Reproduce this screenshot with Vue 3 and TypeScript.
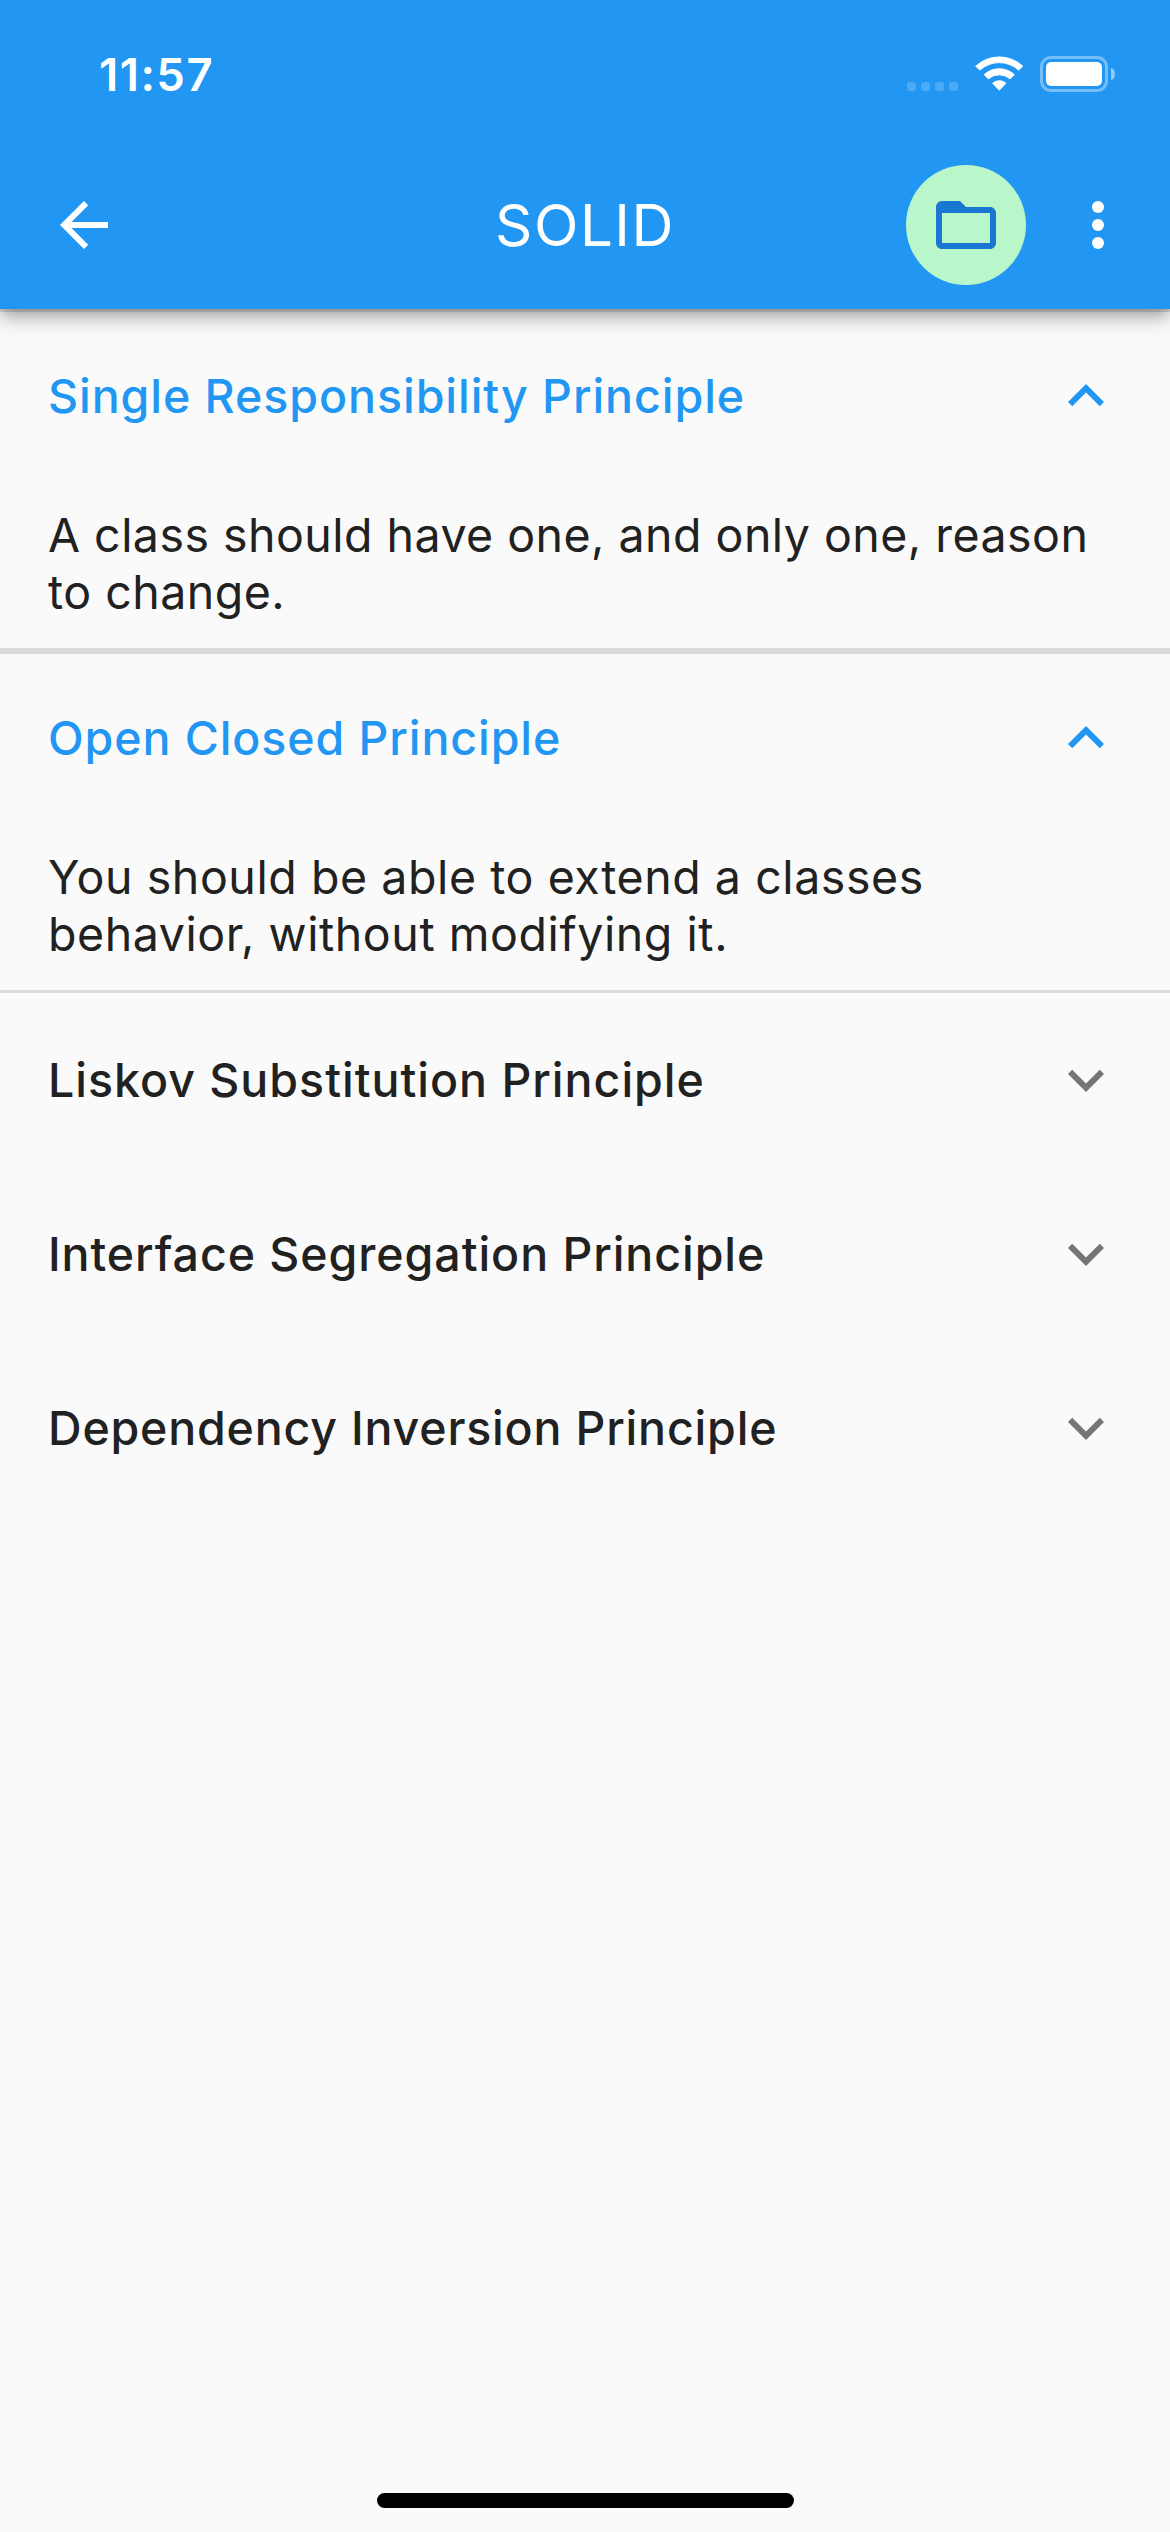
<script setup lang="ts">
import { ref } from 'vue'

interface Principle {
  title: string
  body: string
  open: boolean
  titleTracking: number
  bodyTracking: number
}

const principles = ref<Principle[]>([
  {
    title: 'Single Responsibility Principle',
    body: 'A class should have one, and only one, reason to change.',
    open: true,
    titleTracking: 0.95,
    bodyTracking: 0.47,
  },
  {
    title: 'Open Closed Principle',
    body: 'You should be able to extend a classes behavior, without modifying it.',
    open: true,
    titleTracking: 0.92,
    bodyTracking: 0.57,
  },
  {
    title: 'Liskov Substitution Principle',
    body: 'Derived classes must be substitutable for their base classes.',
    open: false,
    titleTracking: 1.0,
    bodyTracking: 0.5,
  },
  {
    title: 'Interface Segregation Principle',
    body: 'Make fine grained interfaces that are client specific.',
    open: false,
    titleTracking: 0.94,
    bodyTracking: 0.5,
  },
  {
    title: 'Dependency Inversion Principle',
    body: 'Depend on abstractions, not on concretions.',
    open: false,
    titleTracking: 0.82,
    bodyTracking: 0.5,
  },
])
</script>

<template>
  <div class="screen">
    <header class="top">
      <div class="status">
        <span class="time">11:57</span>
        <div class="indicators">
          <div class="signal"><i></i><i></i><i></i><i></i></div>
          <svg class="wifi" width="49" height="36" viewBox="0 0 49 36">
            <g fill="#fff" stroke="#fff" stroke-width="1" stroke-linejoin="round">
              <path d="M.7 11.2A34.6 34.6 0 0 1 47.8 11.2L43.6 15.1A28.6 28.6 0 0 0 4.9 15.1Z" />
              <path d="M9.2 19.6A22.3 22.3 0 0 1 39.3 19.6L35.1 23.9A16.4 16.4 0 0 0 13.4 23.9Z" />
              <path d="M17.6 28.2A10.2 10.2 0 0 1 30.9 28.2L24.25 35.2Z" />
            </g>
          </svg>
          <div class="battery">
            <div class="cell"><div class="charge"></div></div>
            <div class="nub"></div>
          </div>
        </div>
      </div>
      <div class="bar">
        <button class="icon-btn" aria-label="Back">
          <svg width="72" height="72" viewBox="0 0 24 24" fill="#fff">
            <path d="M20 11H7.83l5.59-5.59L12 4l-8 8 8 8 1.41-1.41L7.83 13H20v-2z" />
          </svg>
        </button>
        <h1>SOLID</h1>
        <div class="actions">
          <button class="folder" aria-label="Folder">
            <svg width="72" height="72" viewBox="0 0 24 24" fill="#1976d2">
              <path d="M20 6h-8l-2-2H4c-1.1 0-1.99.9-1.99 2L2 18c0 1.1.9 2 2 2h16c1.1 0 2-.9 2-2V8c0-1.1-.9-2-2-2zm0 12H4V8h16v10z" />
            </svg>
          </button>
          <button class="icon-btn" aria-label="More">
            <svg width="72" height="72" viewBox="0 0 24 24" fill="#fff">
              <circle cx="12" cy="6" r="2" />
              <circle cx="12" cy="12" r="2" />
              <circle cx="12" cy="18" r="2" />
            </svg>
          </button>
        </div>
      </div>
    </header>

    <main>
      <section v-for="p in principles" :key="p.title" class="tile" :class="{ open: p.open }">
        <div class="head" @click="p.open = !p.open">
          <span class="title" :style="{ letterSpacing: p.titleTracking + 'px' }">{{ p.title }}</span>
          <svg width="72" height="72" viewBox="0 0 24 24" fill="currentColor">
            <path v-if="p.open" d="M12 8l-6 6 1.41 1.41L12 10.83l4.59 4.58L18 14z" />
            <path v-else d="M16.59 8.59L12 13.17 7.41 8.59 6 10l6 6 6-6z" />
          </svg>
        </div>
        <p v-if="p.open" class="body" :style="{ letterSpacing: p.bodyTracking + 'px' }">{{ p.body }}</p>
      </section>
    </main>

    <footer><div class="home"></div></footer>
  </div>
</template>

<style>
body {
  margin: 0;
  background: #fafafa;
}
</style>

<style scoped>
.screen {
  width: 1170px;
  height: 2532px;
  display: flex;
  flex-direction: column;
  overflow: hidden;
  background: #fafafa;
  color: #212121;
  font-family: Inter, 'Liberation Sans', sans-serif;
}
.top {
  position: relative;
  z-index: 1;
  height: 309px;
  flex: none;
  background: #2196f3;
  color: #fff;
  box-shadow:
    0 6px 12px -3px rgba(0, 0, 0, 0.2),
    0 12px 15px 0 rgba(0, 0, 0, 0.14),
    0 3px 30px 0 rgba(0, 0, 0, 0.12);
}
.status {
  height: 141px;
  box-sizing: border-box;
  padding: 0 55px 0 99px;
  display: flex;
  justify-content: space-between;
}
.time {
  font-size: 45.4px;
  font-weight: 600;
  line-height: 149px;
  letter-spacing: 1.5px;
}
.indicators {
  display: flex;
  height: 37px;
  margin-top: 55px;
}
.signal {
  display: flex;
  align-items: flex-end;
  gap: 5px;
  height: 36px;
  margin-right: 17px;
}
.signal i {
  width: 9px;
  height: 9px;
  border-radius: 3px;
  background: rgba(255, 255, 255, 0.2);
}
.wifi {
  display: block;
  margin-right: 16px;
}
.battery {
  display: flex;
  align-items: center;
  height: 36px;
  margin-top: 1px;
}
.cell {
  width: 68px;
  height: 36px;
  box-sizing: border-box;
  border: 3px solid rgba(255, 255, 255, 0.38);
  border-radius: 11px;
  padding: 3px;
}
.charge {
  height: 24px;
  border-radius: 5px;
  background: #fff;
}
.nub {
  width: 4px;
  height: 12px;
  margin-left: 3px;
  border-radius: 0 4px 4px 0 / 0 6px 6px 0;
  background: rgba(255, 255, 255, 0.5);
}
.bar {
  height: 168px;
  display: grid;
  grid-template-columns: 1fr auto 1fr;
  align-items: center;
}
button {
  border: 0;
  padding: 0;
  background: none;
  display: flex;
  align-items: center;
  justify-content: center;
}
.icon-btn {
  width: 144px;
  height: 144px;
}
.bar > .icon-btn {
  margin-left: 12px;
}
h1 {
  margin: 0;
  font-size: 58.2px;
  font-weight: 400;
  line-height: 168px;
  letter-spacing: 1.5px;
}
.actions {
  display: flex;
  align-items: center;
  justify-content: flex-end;
}
.folder {
  width: 120px;
  height: 120px;
  border-radius: 50%;
  background: #b9f6ca;
}
main {
  flex: 1;
}
.tile {
  border: 3px solid transparent;
  border-width: 3px 0;
}
.tile.open {
  border-color: rgba(0, 0, 0, 0.12);
}
.head {
  height: 168px;
  padding: 0 48px;
  display: flex;
  align-items: center;
  justify-content: space-between;
  font-size: 46.5px;
  font-weight: 500;
}
.head svg {
  color: #757575;
}
.open .head,
.open .head svg {
  color: #2196f3;
}
.title {
  line-height: 168px;
}
.body {
  margin: 0;
  padding: 27px 48px;
  font-size: 46.5px;
  line-height: 57px;
}
footer {
  height: 39px;
  flex: none;
  display: flex;
  justify-content: center;
}
.home {
  width: 417px;
  height: 15px;
  border-radius: 8px;
  background: #000;
}
</style>
